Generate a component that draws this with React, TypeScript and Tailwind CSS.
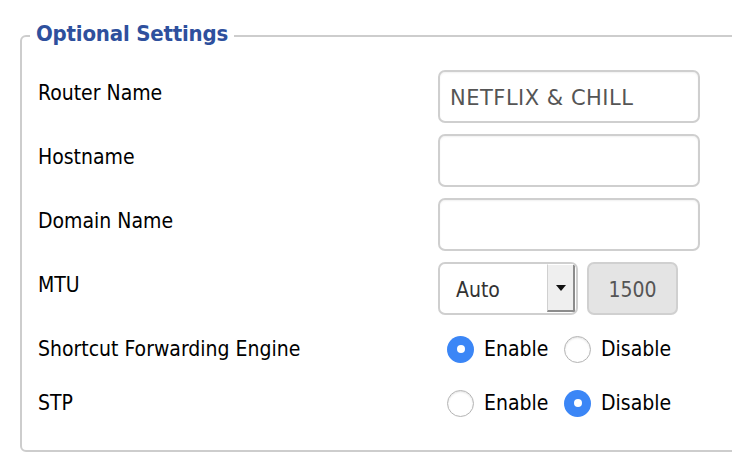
import React from "react";

function Radio({ checked }: { checked: boolean }) {
  if (checked) {
    return (
      <div className="flex h-[27px] w-[27px] shrink-0 items-center justify-center rounded-full bg-[#3b86f6]">
        <div className="h-[8px] w-[8px] rounded-full bg-white" />
      </div>
    );
  }
  return (
    <div className="h-[27px] w-[27px] shrink-0 rounded-full border border-[#b4b4b4] bg-white shadow-[inset_0_1px_2px_rgba(0,0,0,0.12)]" />
  );
}

function TextRow({ label, value }: { label: string; value?: string }) {
  return (
    <div className="flex items-start">
      <div className="w-[400px] pt-[10px] leading-[26px]">{label}</div>
      <div className="flex h-[53px] w-[262px] items-center rounded-[7px] border-2 border-[#cfcfcf] bg-white pl-[10px] pt-[4px] font-['DejaVu_Sans',sans-serif] font-stretch-normal tracking-[0.5px] text-[#555555] shadow-[inset_0_1px_2px_rgba(0,0,0,0.06)]">
        {value}
      </div>
    </div>
  );
}

function RadioRow({ label, enabled }: { label: string; enabled: boolean }) {
  return (
    <div className="flex h-[28px] items-center">
      <div className="w-[400px] leading-[26px]">{label}</div>
      <div className="ml-[9px] flex items-center">
        <Radio checked={enabled} />
        <span className="ml-[10px] w-[64px] leading-[26px]">Enable</span>
        <div className="ml-[16px]">
          <Radio checked={!enabled} />
        </div>
        <span className="ml-[10px] leading-[26px]">Disable</span>
      </div>
    </div>
  );
}

export default function App() {
  return (
    <div className="h-[472px] w-[732px] overflow-hidden bg-white pl-[20px] pt-[19px] font-['DejaVu_Sans_Condensed','DejaVu_Sans',sans-serif] font-stretch-condensed text-[21px] text-black">
      <fieldset className="w-[740px] rounded-[6px] border-2 border-[#cdcdcd] pb-[33px] pl-[16px] pt-[17px]">
        <legend className="-ml-[8px] px-[6px] pb-[6px] pt-[2px] text-[22px] font-bold leading-[26px] tracking-[-0.2px] text-[#2e509d]">
          Optional Settings
        </legend>
        <div className="flex flex-col gap-[11px]">
          <TextRow label="Router Name" value="NETFLIX & CHILL" />
          <TextRow label="Hostname" />
          <TextRow label="Domain Name" />
          <div className="flex items-start">
            <div className="w-[400px] pt-[10px] leading-[26px]">MTU</div>
            <div className="flex h-[53px] w-[140px] items-stretch overflow-hidden rounded-[7px] border-2 border-[#cfcfcf] bg-white">
              <div className="flex flex-1 items-center pl-[16px] pt-[4px] text-[#333333]">Auto</div>
              <div className="mb-[1px] mr-[1px] flex w-[28px] items-center justify-center border-b-2 border-l border-r-2 border-t border-b-[#8c8c8c] border-l-[#d0d0d0] border-r-[#8c8c8c] border-t-white bg-[#efefef]">
                <svg width="10" height="6" viewBox="0 0 10 6">
                  <polygon points="0,0 10,0 5,6" fill="#111" />
                </svg>
              </div>
            </div>
            <div className="ml-[9px] flex h-[53px] w-[91px] items-center justify-center rounded-[7px] border-2 border-[#d0d0d0] bg-[#e4e4e4] pt-[4px] text-[#555555]">
              1500
            </div>
          </div>
        </div>
        <div className="mt-[20px] flex flex-col gap-[26px]">
          <RadioRow label="Shortcut Forwarding Engine" enabled={true} />
          <RadioRow label="STP" enabled={false} />
        </div>
      </fieldset>
    </div>
  );
}
